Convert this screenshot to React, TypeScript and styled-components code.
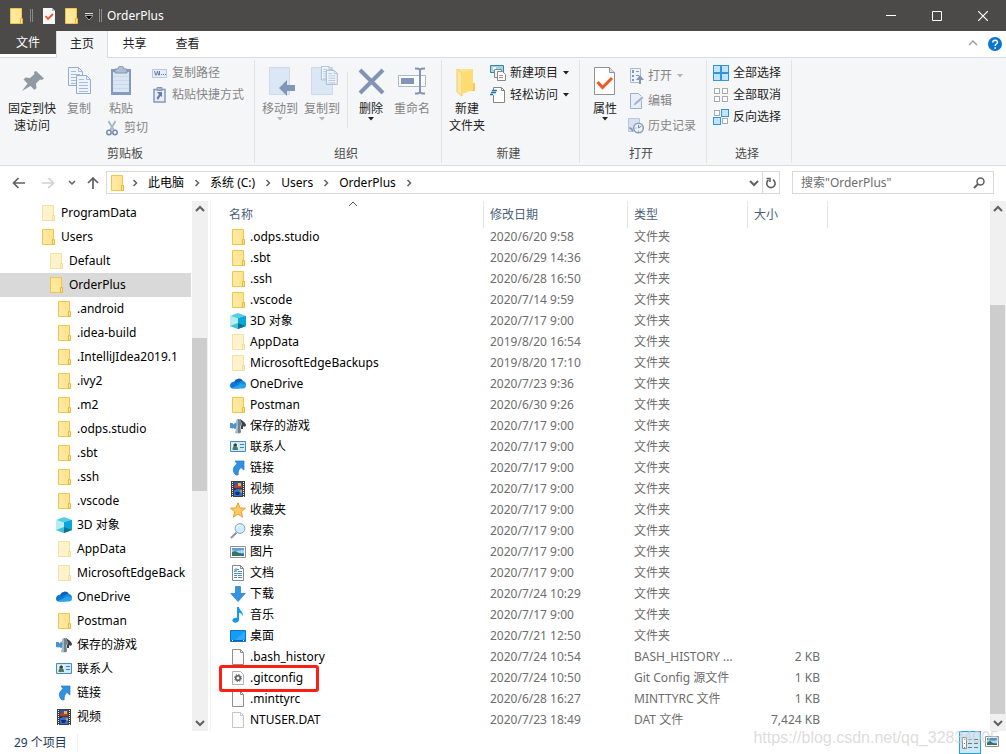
import React from 'react';
import styled, { createGlobalStyle, css } from 'styled-components';

const GlobalStyle = createGlobalStyle`
  * { box-sizing: border-box; }
  body {
    margin: 0;
    background: #fff;
    color: #000;
    font: 12px/18px "Noto Sans", "Noto Sans CJK SC", sans-serif;
  }
  button, input, select { font: inherit; color: inherit; }
  button { border: 0; padding: 0; background: none; cursor: default; }
  a { color: inherit; text-decoration: none; }
  svg { display: block; flex: none; }
`;

/* ---------- icons ---------- */

const Svg = ({ w = 16, h = 16, children }: { w?: number; h?: number; children: React.ReactNode }) => (
  <svg width={w} height={h} viewBox={`0 0 ${w} ${h}`} fill="none" aria-hidden="true">
    {children}
  </svg>
);

const FolderIcon = ({ faded = false }: { faded?: boolean }) => (
  <Svg>
    <g opacity={faded ? 0.5 : 1}>
      <path d="M2.5 .5h11v15h-11z" fill="#ffe593" stroke="#edc64a" />
      <path d="M3 1h3l5 14H3z" fill="#fff" opacity=".12" />
      <path d="M12.500 10.500h2v5h-2z" fill="#ffe593" stroke="#e3b93a" />
    </g>
  </Svg>
);

const CubeIcon = () => (
  <Svg>
    <path d="M0 3l8-3 8 3-8 3z" fill="#55cfe0" />
    <path d="M0 3l8 2.500V16l-8-3z" fill="#b8edf0" />
    <path d="M16 3L8 5.500V16l8-3z" fill="#0a98cc" />
    <path d="M0 13l8-3v6z" fill="#3fc0d4" />
    <path d="M16 13l-8-3v6z" fill="#0a7590" />
    <path d="M8 5.500V10l8 3V3z" fill="#08a6da" />
  </Svg>
);

const CloudIcon = () => (
  <Svg>
    <path d="M4 6a5 5 0 0 1 9-1l-6 5H2z" fill="#0762bb" />
    <path d="M0 9.500a3.500 3.500 0 0 1 5-3.300L11 11l-2 1.500H3a3 3 0 0 1-3-3z" fill="#0f78d4" />
    <path d="M9 6.500a3.800 3.800 0 0 1 4-1.500c2 .3 3 2 3 4L9 10 6 6z" fill="#1685da" />
    <path d="M2 12l8-4c2-1 6 0 6 2 0 1.600-1.300 2.500-2.800 2.500H3.500z" fill="#27a5ea" />
  </Svg>
);

const GamesIcon = () => (
  <Svg>
    <path d="M10 1c2 1.500 6 4 6 6 0 1.800-2 2-3 1.200V11h-2z" fill="#3d4044" />
    <path d="M8 1c1.600 0 3 1.300 2.600 3 1.500.5 2 2 1 3.400L10 8l1 6.500c-1 1.400-5 1.400-6 0L7 8C5 8 4.600 5 6 4c-.5-1.600.5-3 2-3z" fill="#a9b8c3" />
    <path d="M8 1v14c1.500 0 2.600-.2 3-.7L10 8c2-1 2-3.500.6-4C11 2.300 9.600 1 8 1z" fill="#71818d" />
    <path d="M0 5h2.500l1 1.500L5 4.800l1.500 1V10L5 11.300 3.500 10l-1 .6L0 10z" fill="#4d93cb" />
  </Svg>
);

const ContactIcon = () => (
  <Svg>
    <path d="M.5 2.500h15v10H.5z" fill="#cdeafa" stroke="#4b8cbb" />
    <path d="M2 4h6v7H2z" fill="#edf3ee" />
    <path d="M5 4.500a1.600 1.600 0 0 1 1.500 2.700c1 .4 1.500 1.500 1.500 3.800H2.500c0-2.300.4-3.400 1.200-3.800A1.600 1.600 0 0 1 5 4.500z" fill="#4f7767" />
    <path d="M5 4.500a1.500 1.500 0 0 1 1.300 2.500H3.700z" fill="#483629" />
    <path d="M10 5.500h4M10 8.500h4" stroke="#3e84b5" />
  </Svg>
);

const LinkIcon = () => (
  <Svg>
    <path d="M5 1h9v9l-3-2.400C8.500 9.500 8 12 8.200 14.800L6 15C3 12.500 1.500 7.500 7.200 3.800z" fill="#3191df" stroke="#2379c0" strokeWidth=".7" />
  </Svg>
);

const VideoIcon = () => (
  <Svg>
    <path d="M1 0h14v16H1z" fill="#3c3c3c" />
    <path d="M4 1h8v6H4z" fill="#2c57ac" />
    <path d="M4 8h8v7H4z" fill="#3170ce" />
    <path d="M4 5l3-2 2 1 1-1 2 2v2H4z" fill="#b43d32" />
    <path d="M8 2h3v3H8z" fill="#e8b83a" />
    <path d="M5 11h5l-1 3H6zM4 8h2v1H4z" fill="#132e70" />
    <path d="M9 10l3-1v3z" fill="#dba83f" />
    <path d="M2.500 1v15M13.500 1v15" stroke="#f4f4f4" strokeDasharray="1 1" />
  </Svg>
);

const StarIcon = () => (
  <Svg>
    <path d="M8 .8l2 5.200 5.500.2-4.300 3.500 1.500 5.500L8 12.100l-4.700 3.100 1.500-5.500L.5 6.200 6 6z" fill="#ffcb62" stroke="#e99b2e" />
  </Svg>
);

const SearchFolderIcon = () => (
  <Svg>
    <path d="M6.500 9.500L1 15" stroke="#8a949e" strokeWidth="2" />
    <circle cx="10" cy="5.500" r="4.900" fill="#d0ecfb" stroke="#7ba5c6" />
    <path d="M7 5a3 3 0 0 1 4-2.500" stroke="#fff" />
  </Svg>
);

const PictureIcon = () => (
  <Svg>
    <path d="M.5 2.500h15v11H.5z" fill="#fff" stroke="#8b9298" />
    <path d="M2 4h12v8H2z" fill="#a9d5f1" />
    <path d="M2 4h12v2L6 7 2 6z" fill="#5da0d9" />
    <path d="M2 8l3-1 4 2 5 .5V12H2z" fill="#36735f" />
    <path d="M6 12l4-1.500 4-.5v2z" fill="#356ea6" />
  </Svg>
);

const ThumbnailIcon = () => (
  <Svg>
    <path d="M1.500 1.500h13v10h-13z" fill="#fff" stroke="#8b9298" />
    <path d="M3 3h10v7H3z" fill="#a9d5f1" />
    <path d="M3 3h10v2L8 6 3 5z" fill="#4a90d6" />
    <path d="M3 7l3-1 3 2 4 .5V10H3z" fill="#36735f" />
  </Svg>
);

const DocumentIcon = () => (
  <Svg>
    <path d="M2.500.5h8l3 3v12h-11z" fill="#fff" stroke="#81898e" />
    <path d="M10.500.5v3h3" stroke="#81898e" />
    <path d="M7 4.500h2M4 6.500h2M8 6.500h4M4 8.500h8M4 10.500h3M8 10.500h4M4 12.500h3M8 12.500h4" stroke="#4b8dbb" />
    <path d="M4 4l3-1v4H5z" fill="#75b2db" />
  </Svg>
);

const DownloadIcon = () => (
  <Svg>
    <path d="M5.500.5h5v7h4.700L8 15.500.8 7.500h4.700z" fill="#3594e1" stroke="#2080cb" strokeWidth=".7" />
  </Svg>
);

const MusicIcon = () => (
  <Svg>
    <path d="M7 0h2c.2 3.500 5 4.500 3.600 9.500C12.400 7.300 10.800 6 9 5.800v7c0 1.700-1.600 2.900-3.500 2.900S2.400 14.700 2.400 13.300c0-1.700 2.200-3 4.600-2.500z" fill="#119bf0" />
  </Svg>
);

const DesktopIcon = () => (
  <Svg>
    <path d="M.5 2.500h15v11H.5z" fill="#159df5" stroke="#0675cb" />
    <path d="M15 3v8L6 13h-2z" fill="#4ab9fb" opacity=".5" />
    <path d="M1 12.500h14" stroke="#075fa8" />
    <path d="M2 12.500h1M13 12.500h1" stroke="#fff" />
  </Svg>
);

const FileIcon = ({ faded = false }: { faded?: boolean }) => (
  <Svg>
    <g opacity={faded ? 0.5 : 1}>
      <path d="M2.500.5h8l3 3v12h-11z" fill="#fafafa" stroke="#8e8e8e" />
      <path d="M10.500.5v3h3" stroke="#8e8e8e" />
    </g>
  </Svg>
);

const ConfigIcon = () => (
  <Svg>
    <path d="M2.500 1.500h8l3 3v10h-11z" fill="#fafafa" stroke="#b2b2b2" />
    <circle cx="8" cy="8" r="2.300" stroke="#596269" strokeWidth="1.600" />
    <circle cx="8" cy="8" r="3.500" stroke="#596269" strokeDasharray="1.300 1.450" />
  </Svg>
);

const CheckPageSmall = () => (
  <Svg>
    <path d="M2 0h9l3 3v13H2z" fill="#f7f7f7" />
    <path d="M11 0v3h3z" fill="#bcbcbc" />
    <path d="M4.500 8L7 11l5-5" stroke="#ea5524" strokeWidth="1.800" />
  </Svg>
);

const PinIcon = () => (
  <Svg w={32} h={32}>
    <path d="M20 5l8 7.500-2 1.500-2-.5-4 4 .5 4.500-2 2-4-4L6 25l5.500-7.500-4-4 2-2 4.500.5 4.500-4-.5-2z" fill="#8f9ba3" />
  </Svg>
);

const PageLines = ({ x, y }: { x: number; y: number }) => (
  <g transform={`translate(${x} ${y})`}>
    <path d="M.5.500h10l4 4v14h-14z" fill="#eef4fc" stroke="#97abca" />
    <path d="M10.500.5v4h4M3 4.500h5M3 7.500h9M3 10.500h9M3 13.500h9M3 16.500h9" stroke="#a9bbd6" />
  </g>
);

const CopyIcon = () => (
  <Svg w={32} h={32}>
    <PageLines x={5} y={1} />
    <PageLines x={13} y={9} />
  </Svg>
);

const PasteIcon = () => (
  <Svg w={32} h={32}>
    <path d="M6 3h20v26H6z" fill="#839abd" />
    <path d="M8 6h16v20H8z" fill="#dbe6f5" />
    <path d="M8 10.500h16M8 14.500h16M8 18.500h16M8 22.500h16" stroke="#ccd9ec" />
    <path d="M10 3h3c0-4 6-4 6 0h3v4H10z" fill="#aebdd1" stroke="#8395b3" />
  </Svg>
);

const CutIcon = () => (
  <Svg>
    <path d="M4.500 1l5.500 9.500M11.500 1L6 10.500" stroke="#a3b4cc" strokeWidth="1.800" />
    <circle cx="5" cy="12.500" r="2.200" stroke="#7389ac" strokeWidth="1.500" />
    <circle cx="11" cy="12.500" r="2.200" stroke="#7389ac" strokeWidth="1.500" />
  </Svg>
);

const PathIcon = () => (
  <Svg>
    <path d="M0 4h15v9H0z" fill="#b9c9e0" />
    <path d="M1 5h13v7H1z" fill="#e7edf7" />
    <path d="M2.500 6l1 4h1l1-4 1 4h1V6M9 9.500h1M11 9.500h1M13 9.500h1" stroke="#67809f" />
  </Svg>
);

const PasteShortcutIcon = () => (
  <Svg>
    <path d="M2 2.500h11v12.500H2z" fill="#e7eef8" stroke="#8398b9" strokeWidth="1.500" />
    <path d="M5 .5h5v3H5z" fill="#a6b6cc" stroke="#8398b9" />
    <path d="M5 5h5v5L8.500 9 6 13 4.500 11 7 7.500z" fill="#647da3" />
  </Svg>
);

const MoveToIcon = () => (
  <Svg w={32} h={32}>
    <path d="M5.500 1.500h20v27h-20z" fill="#dce7f6" stroke="#cedaec" />
    <path d="M15 22l8-8v5h8v6h-8v5z" fill="#8296b7" />
  </Svg>
);

const CopyToIcon = () => (
  <Svg w={32} h={32}>
    <path d="M5.500 1.500h21v27h-21z" fill="#dce7f6" stroke="#cedaec" />
    <g transform="translate(15 0) scale(.75)"><PageLines x={0} y={0} /></g>
    <g transform="translate(20 4) scale(.78)"><PageLines x={0} y={0} /></g>
  </Svg>
);

const DeleteIcon = () => (
  <Svg w={32} h={32}>
    <path d="M5 4l23 23M28 4L5 27" stroke="#8194b5" strokeWidth="4" />
  </Svg>
);

const RenameIcon = () => (
  <Svg w={32} h={32}>
    <path d="M2.500 9.500h27v11h-27z" fill="#fafcfe" stroke="#a9b9d1" />
    <path d="M5 12h13v6H5z" fill="#8295b7" />
    <path d="M19 2.500c3 0 5 0 5 2 0-2 2-2 5-2M24 4v22M19 27.500c3 0 5 0 5-2 0 2 2 2 5 2" stroke="#8194b5" strokeWidth="2" />
  </Svg>
);

const NewFolderIcon = () => (
  <Svg w={32} h={32}>
    <path d="M6 3h16v21H6z" fill="#ffe28b" />
    <path d="M20 17h4v8h-4z" fill="#f1ca52" />
    <path d="M6 3l5 4v23l-5-4z" fill="#fbe6a2" stroke="#f0cd62" />
    <path d="M11 7l11-4v21l-11 4z" fill="#ffdc72" />
  </Svg>
);

const NewItemIcon = () => (
  <Svg>
    <path d="M.5.500h13v7H.5z" fill="#9fd6e5" stroke="#3f8399" />
    <path d="M3 2h3v3H3z" fill="#fff" />
    <path d="M4.500 4.500h7v8h-7z" fill="#f2f6f7" stroke="#7e8b90" />
    <path d="M7.500 6.500h5l3 3v6h-8z" fill="#fff" stroke="#84888b" />
    <path d="M9 10.500h4M9 12.500h4" stroke="#dd8573" />
  </Svg>
);

const EasyAccessIcon = () => (
  <Svg>
    <path d="M3.500.5h8l3 3v12h-11z" fill="#fff" stroke="#858585" />
    <path d="M11.500.5v3h3" stroke="#858585" />
    <path d="M2 3h5v5H1z" fill="#f5f6f7" />
    <path d="M2 3.500h5M1 5.500h5M0 7.500h3" stroke="#2776b6" strokeWidth="1.400" />
  </Svg>
);

const PropertiesIcon = () => (
  <Svg w={32} h={32}>
    <path d="M5.500 1.500h15l5 5v22h-20z" fill="#fff" stroke="#919191" />
    <path d="M20.500 1.500v5h5" fill="#ddd" stroke="#919191" />
    <path d="M8.500 16l5 5.500L23 12" stroke="#ee5a24" strokeWidth="3" />
  </Svg>
);

const OpenIcon = () => (
  <Svg>
    <path d="M2.500.5h10v14h-10z" fill="#eff4fb" stroke="#abb9ce" />
    <path d="M4 2h2v3H4zM4 7h2v2H4zM4 11h2v2H4zM8 3h3v1H8zM8 7h3v1H8z" fill="#8296b7" />
    <path d="M11 16v-4H8l4-5 4 5h-3v4z" fill="#8296b7" />
  </Svg>
);

const EditIcon = () => (
  <Svg>
    <path d="M2.500.5h8l3 3v12h-11z" fill="#e7eef8" stroke="#9cafcb" />
    <path d="M5 13l1-3 8-7 2 2-8 7z" fill="#a4b4cd" stroke="#fff" strokeWidth=".6" />
  </Svg>
);

const HistoryIcon = () => (
  <Svg>
    <path d="M.5.500h11v13H.5z" fill="#d7e1ef" stroke="#b7c6dc" />
    <circle cx="10.500" cy="10" r="4.800" fill="#eef3f9" stroke="#8b9dbc" strokeWidth="1.500" />
    <path d="M10.500 7v3l3-2M7.500 10h1M10.500 12.500v1" stroke="#7488aa" />
    <path d="M2 9l3 2v3l-4-4z" fill="#8498b8" />
  </Svg>
);

const SelectGrid = ({ on }: { on: boolean[] }) => (
  <Svg>
    {on.map((active, i) => {
      const x = (i % 2) * 8;
      const y = i > 1 ? 8 : 0;
      return active ? (
        <rect key={i} x={x + 0.5} y={y + 0.5} width="7" height="7" fill="#bfe4fc" stroke="#3194dd" />
      ) : (
        <rect key={i} x={x + 1.5} y={y + 1.5} width="5" height="5" fill="#fff" stroke="#aaa" />
      );
    })}
  </Svg>
);

const Chevron = ({ dir, color = '#606060', width = 1.5 }: { dir: 'up' | 'down' | 'right'; color?: string; width?: number }) => {
  const paths = { up: 'M1 6l4-4 4 4', down: 'M1 3l4 4 4-4', right: 'M3.500 2l3 3-3 3' };
  return (
    <Svg w={10} h={10}>
      <path d={paths[dir]} stroke={color} strokeWidth={width} />
    </Svg>
  );
};

const Caret = ({ muted = false }: { muted?: boolean }) => (
  <Svg w={6} h={4}>
    <path d="M0 0h6L3 3.500z" fill={muted ? '#b4b4b4' : '#222'} />
  </Svg>
);

const BackArrow = () => (
  <Svg w={14} h={14}>
    <path d="M13 7H2M6.500 2L1.500 7l5 5" stroke="#606060" strokeWidth="1.700" />
  </Svg>
);

const ForwardArrow = () => (
  <Svg w={14} h={14}>
    <path d="M1 7h11M7.500 2l5 5-5 5" stroke="#d0d0d0" strokeWidth="1.700" />
  </Svg>
);

/* ---------- window frame ---------- */

const Window = styled.div`
  position: relative;
  display: flex;
  flex-direction: column;
  height: 100vh;
  overflow: hidden;
`;

const TitleBar = styled.header`
  display: flex;
  flex: none;
  align-items: center;
  height: 31px;
  padding-left: 8px;
  background: #4b4a48;
  color: #fff;
`;

const QuickAccess = styled.div`
  display: flex;
  align-items: center;
  gap: 6px;
  padding-right: 5px;
`;

const Grip = styled.span`
  width: 3px;
  height: 13px;
  border: solid #8a8988;
  border-width: 0 1px;
  margin-right: 2px;

  &:last-child { margin-right: 0; }
`;

const WindowTitle = styled.h1`
  flex: 1;
  margin: 0;
  font-size: 12px;
  font-weight: 400;
`;

const CaptionButton = styled.button`
  display: grid;
  place-items: center;
  width: 46px;
  height: 31px;
`;

const TabStrip = styled.nav`
  display: flex;
  flex: none;
  height: 27px;
  border-bottom: 1px solid #dadbdc;
`;

const Tab = styled.button<{ $kind?: 'file' | 'active' }>`
  width: 53px;
  height: 25px;
  color: #222;
  ${({ $kind }) => $kind === 'file' && css`
    width: 56px;
    height: 23px;
    background: #4b4a48;
    color: #fff;
  `}
  ${({ $kind }) => $kind === 'active' && css`
    width: 52px;
    height: 27px;
    padding-bottom: 2px;
    border: solid #dadbdc;
    border-width: 0 1px;
    background: #f5f6f7;
  `}
`;

const TabTools = styled.div`
  display: flex;
  align-items: center;
  gap: 10px;
  margin-left: auto;
  padding-right: 4px;
`;

/* ---------- ribbon ---------- */

const Ribbon = styled.section`
  display: flex;
  flex: none;
  height: 108px;
  padding: 2px 0;
  border-bottom: 1px solid #dadbdc;
  background: #f5f6f7;
`;

const Group = styled.section`
  display: flex;
  flex-direction: column;
  justify-content: space-between;
  padding: 0 8px 0 4px;
  border-right: 1px solid #e2e3e4;
`;

const GroupBody = styled.div`
  display: flex;
`;

const GroupLabel = styled.h2`
  margin: 0;
  color: #4a4a4a;
  font-size: 12px;
  font-weight: 400;
  text-align: center;
`;

const BigButtonRoot = styled.button<{ $width: number; $muted?: boolean }>`
  display: flex;
  flex-direction: column;
  align-items: center;
  width: ${({ $width }) => $width}px;
  padding-top: 6px;
  color: ${({ $muted }) => ($muted ? '#858585' : '#222')};
  line-height: 17px;
  white-space: pre-line;

  span { padding-top: 2px; }
`;

interface BigButtonProps {
  icon: React.ReactNode;
  label: string;
  width: number;
  muted?: boolean;
  menu?: boolean;
}

const BigButton = ({ icon, label, width, muted, menu }: BigButtonProps) => (
  <BigButtonRoot type="button" $width={width} $muted={muted}>
    {icon}
    <span>{label}</span>
    {menu && <Caret muted={muted} />}
  </BigButtonRoot>
);

const SmallColumn = styled.div<{ $roomy?: boolean }>`
  display: flex;
  flex-direction: column;
  gap: ${({ $roomy }) => ($roomy ? 3 : 0)}px;
  padding: ${({ $roomy }) => ($roomy ? 5 : 2)}px 2px 0;
`;

const PasteColumn = styled.div`
  display: flex;
  flex-direction: column;
  margin-right: 2px;
`;

const CutRow = styled.div`
  padding-left: 6px;
`;

const SmallButtonRoot = styled.button<{ $muted?: boolean }>`
  display: flex;
  align-items: center;
  gap: 4px;
  height: 22px;
  color: ${({ $muted }) => ($muted ? '#858585' : '#222')};
  white-space: nowrap;

  svg:last-child:not(:first-child) { margin-left: 1px; }
`;

interface SmallButtonProps {
  icon: React.ReactNode;
  label: string;
  muted?: boolean;
  menu?: boolean;
}

const SmallButton = ({ icon, label, muted, menu }: SmallButtonProps) => (
  <SmallButtonRoot type="button" $muted={muted}>
    {icon}
    <span>{label}</span>
    {menu && <Caret muted={muted} />}
  </SmallButtonRoot>
);

const Divider = styled.span`
  width: 1px;
  height: 56px;
  margin: 12px 3px 0 4px;
  background: #e2e3e4;
`;

/* ---------- address row ---------- */

const AddressRow = styled.div`
  display: flex;
  flex: none;
  align-items: center;
  height: 35px;
  padding: 0 12px 2px;
`;

const HistoryNav = styled.div`
  display: flex;
  align-items: center;
  gap: 15px;
  width: 94px;
`;

const HistoryTail = styled.div`
  display: flex;
  align-items: center;
  gap: 9px;
  margin-left: -3px;
`;

const AddressBox = styled.div`
  display: flex;
  flex: 1;
  align-items: center;
  height: 23px;
  margin-right: 12px;
  padding-left: 2px;
  border: 1px solid #d9d9d9;
`;

const Crumbs = styled.ol`
  display: flex;
  flex: 1;
  align-items: center;
  margin: 0 0 0 -3px;
  padding: 0;
  list-style: none;

  li { display: flex; align-items: center; }
`;

const CrumbArrow = styled.span`
  display: grid;
  place-items: center;
  width: 26px;
`;

const AddressButton = styled.button<{ $bordered?: boolean }>`
  display: grid;
  place-items: center;
  width: 17px;
  height: 21px;
  border-left: ${({ $bordered }) => ($bordered ? '1px solid #d9d9d9' : '0')};
`;

const SearchBox = styled.label`
  display: flex;
  flex: 0 0 20%;
  min-width: 202px;
  align-items: center;
  height: 23px;
  padding: 0 8px;
  border: 1px solid #d9d9d9;
`;

const SearchInput = styled.input`
  flex: 1;
  min-width: 0;
  padding: 0;
  border: 0;
  outline: 0;
  background: none;
  &::placeholder { color: #6d6d6d; opacity: 1; }
`;

/* ---------- body ---------- */

const Body = styled.main`
  display: flex;
  flex: 1;
  min-height: 0;
`;

const TreePane = styled.nav`
  display: flex;
  flex: none;
  width: 211px;
  padding-right: 2px;
  border-right: 1px solid #f3f3f3;
`;

const TreeList = styled.ul`
  flex: 1;
  min-width: 0;
  margin: 0;
  padding: 0 1px 0 0;
  overflow: hidden;
  list-style: none;
`;

const TreeLink = styled.a<{ $level: number; $selected?: boolean }>`
  display: flex;
  align-items: center;
  gap: 5px;
  height: 24px;
  padding-left: ${({ $level }) => 40 + $level * 8}px;
  overflow: hidden;
  background: ${({ $selected }) => ($selected ? '#d9d9d9' : 'transparent')};
  white-space: nowrap;
`;

const ScrollTrack = styled.div`
  display: flex;
  flex: none;
  flex-direction: column;
  width: 16px;
  background: #f0f0f0;
`;

const ScrollButton = styled.button`
  display: grid;
  flex: none;
  place-items: center;
  width: 15px;
  height: 17px;
`;

const ScrollPart = styled.div<{ $share: number; $thumb?: boolean }>`
  flex: ${({ $share }) => $share} 0 0;
  margin-right: 1px;
  background: ${({ $thumb }) => ($thumb ? '#cdcdcd' : 'transparent')};
`;

const ScrollBar = ({ before, thumb, after }: { before: number; thumb: number; after: number }) => (
  <ScrollTrack>
    <ScrollButton type="button" aria-label="向上滚动"><Chevron dir="up" width={2} /></ScrollButton>
    <ScrollPart $share={before} />
    <ScrollPart $share={thumb} $thumb />
    <ScrollPart $share={after} />
    <ScrollButton type="button" aria-label="向下滚动"><Chevron dir="down" width={2} /></ScrollButton>
  </ScrollTrack>
);

const FilePane = styled.section`
  display: flex;
  flex: 1;
  min-width: 0;
`;

const TableArea = styled.div`
  flex: 1;
  min-width: 0;
  overflow: hidden;
`;

const FileTable = styled.table`
  width: 617px;
  border-collapse: collapse;
  table-layout: fixed;
`;

const HeadCell = styled.th<{ $width: number }>`
  position: relative;
  width: ${({ $width }) => $width}px;
  height: 25px;
  padding: 2px 0 0 6px;
  color: #4c607a;
  font-weight: 400;
  text-align: left;

  &:first-child { padding-left: 18px; }
  &::after {
    content: "";
    position: absolute;
    top: 0;
    right: 0;
    width: 1px;
    height: 27px;
    background: #e5e5e5;
  }
`;

const SortMark = styled.span`
  position: absolute;
  top: -1px;
  left: 50%;
`;

const Cell = styled.td<{ $right?: boolean }>`
  height: 21px;
  padding: 0 8px 0 6px;
  overflow: hidden;
  color: #6d6d6d;
  text-align: ${({ $right }) => ($right ? 'right' : 'left')};
  text-overflow: ellipsis;
  white-space: nowrap;
`;

const NameCell = styled(Cell)`
  position: relative;
  padding: 0 0 0 19px;
  overflow: visible;
  color: #000;
`;

const FileName = styled.a`
  display: flex;
  align-items: center;
  gap: 4px;
`;

const Callout = styled.span`
  position: absolute;
  top: -2px;
  left: 8px;
  width: 100px;
  height: 27px;
  border: 3px solid #fb1f14;
  border-radius: 3px;
  z-index: 1;
`;

const StatusBar = styled.footer`
  display: flex;
  flex: none;
  align-items: center;
  height: 23px;
  padding: 0 6px 0 14px;
  color: #1e395b;
`;

const ItemCount = styled.span`
  padding-right: 10px;
  margin-right: auto;
  border-right: 1px solid #f0f0f0;
`;

const ViewButton = styled.button<{ $active?: boolean }>`
  display: grid;
  place-items: center;
  width: 22px;
  height: 23px;
  margin-left: 2px;
  border: ${({ $active }) => ($active ? '1px solid #26a0da' : '0')};
  background: ${({ $active }) => ($active ? '#cbe8f6' : 'transparent')};

  &:last-child { width: 16px; margin-left: 3px; }
`;

const Watermark = styled.div`
  position: absolute;
  right: 7px;
  bottom: 6px;
  color: rgba(205, 205, 205, 0.7);
  font: 16px/20px "Liberation Sans", sans-serif;
  pointer-events: none;
`;

/* ---------- data ---------- */

const glyphs = {
  folder: <FolderIcon />,
  hidden: <FolderIcon faded />,
  cube: <CubeIcon />,
  cloud: <CloudIcon />,
  games: <GamesIcon />,
  contact: <ContactIcon />,
  link: <LinkIcon />,
  video: <VideoIcon />,
  star: <StarIcon />,
  search: <SearchFolderIcon />,
  picture: <PictureIcon />,
  document: <DocumentIcon />,
  download: <DownloadIcon />,
  music: <MusicIcon />,
  desktop: <DesktopIcon />,
  file: <FileIcon />,
  hiddenFile: <FileIcon faded />,
  config: <ConfigIcon />,
};
type Glyph = keyof typeof glyphs;

const tree: [Glyph, string, number][] = [
  ['hidden', 'ProgramData', 0],
  ['folder', 'Users', 0],
  ['hidden', 'Default', 1],
  ['folder', 'OrderPlus', 1],
  ['folder', '.android', 2],
  ['folder', '.idea-build', 2],
  ['folder', '.IntelliJIdea2019.1', 2],
  ['folder', '.ivy2', 2],
  ['folder', '.m2', 2],
  ['folder', '.odps.studio', 2],
  ['folder', '.sbt', 2],
  ['folder', '.ssh', 2],
  ['folder', '.vscode', 2],
  ['cube', '3D 对象', 2],
  ['hidden', 'AppData', 2],
  ['hidden', 'MicrosoftEdgeBack', 2],
  ['cloud', 'OneDrive', 2],
  ['folder', 'Postman', 2],
  ['games', '保存的游戏', 2],
  ['contact', '联系人', 2],
  ['link', '链接', 2],
  ['video', '视频', 2],
];

const files: [Glyph, string, string, string?, string?][] = [
  ['folder', '.odps.studio', '2020/6/20 9:58'],
  ['folder', '.sbt', '2020/6/29 14:36'],
  ['folder', '.ssh', '2020/6/28 16:50'],
  ['folder', '.vscode', '2020/7/14 9:59'],
  ['cube', '3D 对象', '2020/7/17 9:00'],
  ['hidden', 'AppData', '2019/8/20 16:54'],
  ['hidden', 'MicrosoftEdgeBackups', '2019/8/20 17:10'],
  ['cloud', 'OneDrive', '2020/7/23 9:36'],
  ['folder', 'Postman', '2020/6/30 9:26'],
  ['games', '保存的游戏', '2020/7/17 9:00'],
  ['contact', '联系人', '2020/7/17 9:00'],
  ['link', '链接', '2020/7/17 9:00'],
  ['video', '视频', '2020/7/17 9:00'],
  ['star', '收藏夹', '2020/7/17 9:00'],
  ['search', '搜索', '2020/7/17 9:00'],
  ['picture', '图片', '2020/7/17 9:00'],
  ['document', '文档', '2020/7/17 9:00'],
  ['download', '下载', '2020/7/24 10:29'],
  ['music', '音乐', '2020/7/17 9:00'],
  ['desktop', '桌面', '2020/7/21 12:50'],
  ['file', '.bash_history', '2020/7/24 10:54', 'BASH_HISTORY ...', '2 KB'],
  ['config', '.gitconfig', '2020/7/24 10:50', 'Git Config 源文件', '1 KB'],
  ['file', '.minttyrc', '2020/6/28 16:27', 'MINTTYRC 文件', '1 KB'],
  ['hiddenFile', 'NTUSER.DAT', '2020/7/23 18:49', 'DAT 文件', '7,424 KB'],
];

const crumbs = ['此电脑', '系统 (C:)', 'Users', 'OrderPlus'];

/* ---------- page ---------- */

export default function App() {
  return (
    <Window>
      <GlobalStyle />
      <TitleBar>
        <QuickAccess>
          <FolderIcon />
          <Grip />
          <CheckPageSmall />
          <FolderIcon />
          <Svg w={8} h={8}>
            <path d="M0 1.500h8" stroke="#ddd" />
            <path d="M0 3.500h8L4 8z" fill="#000" stroke="#ddd" strokeWidth=".7" />
          </Svg>
          <Grip />
        </QuickAccess>
        <WindowTitle>OrderPlus</WindowTitle>
        <CaptionButton type="button" aria-label="最小化">
          <Svg w={10} h={10}><path d="M0 4.500h10" stroke="#fff" /></Svg>
        </CaptionButton>
        <CaptionButton type="button" aria-label="最大化">
          <Svg w={10} h={10}><path d="M.5.500h9v9h-9z" stroke="#fff" /></Svg>
        </CaptionButton>
        <CaptionButton type="button" aria-label="关闭">
          <Svg w={10} h={10}><path d="M0 0l10 10M10 0L0 10" stroke="#fff" strokeWidth="1.200" /></Svg>
        </CaptionButton>
      </TitleBar>

      <TabStrip>
        <Tab type="button" $kind="file">文件</Tab>
        <Tab type="button" $kind="active">主页</Tab>
        <Tab type="button">共享</Tab>
        <Tab type="button">查看</Tab>
        <TabTools>
          <Chevron dir="up" color="#a0a0a0" />
          <Svg w={14} h={14}>
            <circle cx="7" cy="7" r="7" fill="#0b76d0" />
            <path d="M4.800 5.500c0-3 4.600-3 4.600-.3C9.400 7 7.100 7 7.100 9M7.100 10.200v1.600" stroke="#fff" strokeWidth="1.500" />
          </Svg>
        </TabTools>
      </TabStrip>

      <Ribbon>
        <Group>
          <GroupBody>
            <BigButton icon={<PinIcon />} label={'固定到快\n速访问'} width={56} />
            <BigButton icon={<CopyIcon />} label="复制" width={38} muted />
            <PasteColumn>
              <BigButton icon={<PasteIcon />} label="粘贴" width={46} muted />
              <CutRow>
                <SmallButton icon={<CutIcon />} label="剪切" muted />
              </CutRow>
            </PasteColumn>
            <SmallColumn>
              <SmallButton icon={<PathIcon />} label="复制路径" muted />
              <SmallButton icon={<PasteShortcutIcon />} label="粘贴快捷方式" muted />
            </SmallColumn>
          </GroupBody>
          <GroupLabel>剪贴板</GroupLabel>
        </Group>
        <Group>
          <GroupBody>
            <BigButton icon={<MoveToIcon />} label="移动到" width={42} muted menu />
            <BigButton icon={<CopyToIcon />} label="复制到" width={42} muted menu />
            <Divider />
            <BigButton icon={<DeleteIcon />} label="删除" width={40} menu />
            <BigButton icon={<RenameIcon />} label="重命名" width={42} muted />
          </GroupBody>
          <GroupLabel>组织</GroupLabel>
        </Group>
        <Group>
          <GroupBody>
            <BigButton icon={<NewFolderIcon />} label={'新建\n文件夹'} width={42} />
            <SmallColumn>
              <SmallButton icon={<NewItemIcon />} label="新建项目" menu />
              <SmallButton icon={<EasyAccessIcon />} label="轻松访问" menu />
            </SmallColumn>
          </GroupBody>
          <GroupLabel>新建</GroupLabel>
        </Group>
        <Group>
          <GroupBody>
            <BigButton icon={<PropertiesIcon />} label="属性" width={42} menu />
            <SmallColumn $roomy>
              <SmallButton icon={<OpenIcon />} label="打开" muted menu />
              <SmallButton icon={<EditIcon />} label="编辑" muted />
              <SmallButton icon={<HistoryIcon />} label="历史记录" muted />
            </SmallColumn>
          </GroupBody>
          <GroupLabel>打开</GroupLabel>
        </Group>
        <Group>
          <GroupBody>
            <SmallColumn>
              <SmallButton icon={<SelectGrid on={[true, true, true, true]} />} label="全部选择" />
              <SmallButton icon={<SelectGrid on={[false, false, false, false]} />} label="全部取消" />
              <SmallButton icon={<SelectGrid on={[false, true, true, false]} />} label="反向选择" />
            </SmallColumn>
          </GroupBody>
          <GroupLabel>选择</GroupLabel>
        </Group>
      </Ribbon>

      <AddressRow>
        <HistoryNav>
          <button type="button" aria-label="后退"><BackArrow /></button>
          <button type="button" aria-label="前进"><ForwardArrow /></button>
          <HistoryTail>
            <button type="button" aria-label="最近位置">
              <Svg w={10} h={10}><path d="M2 3l3 3 3-3" stroke="#606060" strokeWidth="1.500" /></Svg>
            </button>
            <button type="button" aria-label="上移">
              <Svg w={14} h={14}><path d="M7 13V2M2 7l5-5 5 5" stroke="#606060" strokeWidth="1.700" /></Svg>
            </button>
          </HistoryTail>
        </HistoryNav>
        <AddressBox>
          <FolderIcon />
          <Crumbs>
            {crumbs.map((name) => (
              <li key={name}>
                <CrumbArrow><Chevron dir="right" /></CrumbArrow>
                <a href="#crumb">{name}</a>
              </li>
            ))}
            <li><CrumbArrow><Chevron dir="right" /></CrumbArrow></li>
          </Crumbs>
          <AddressButton type="button" aria-label="历史位置"><Chevron dir="down" width={2} /></AddressButton>
          <AddressButton type="button" aria-label="刷新" $bordered>
            <Svg w={12} h={12}>
              <path d="M8 2.800a4.200 4.200 0 1 1-4.500.2" stroke="#606060" strokeWidth="1.600" />
              <path d="M1.500 1.500H5V5" stroke="#606060" strokeWidth="1.500" />
            </Svg>
          </AddressButton>
        </AddressBox>
        <SearchBox>
          <SearchInput type="text" aria-label="搜索" placeholder={'搜索"OrderPlus"'} />
          <Svg w={12} h={12}>
            <circle cx="7.500" cy="4.500" r="3.500" stroke="#606060" strokeWidth="1.500" />
            <path d="M5 7L1 11" stroke="#606060" strokeWidth="2" />
          </Svg>
        </SearchBox>
      </AddressRow>

      <Body>
        <TreePane aria-label="导航窗格">
          <TreeList>
            {tree.map(([glyph, name, level]) => (
              <li key={name}>
                <TreeLink href="#folder" $level={level} $selected={name === 'OrderPlus'}>
                  {glyphs[glyph]}
                  <span>{name}</span>
                </TreeLink>
              </li>
            ))}
          </TreeList>
          <ScrollBar before={120} thumb={153} after={223} />
        </TreePane>

        <FilePane>
          <TableArea>
            <FileTable>
              <thead>
                <tr>
                  <HeadCell scope="col" $width={273}>
                    名称
                    <SortMark><Chevron dir="up" width={1} /></SortMark>
                  </HeadCell>
                  <HeadCell scope="col" $width={144}>修改日期</HeadCell>
                  <HeadCell scope="col" $width={120}>类型</HeadCell>
                  <HeadCell scope="col" $width={80}>大小</HeadCell>
                </tr>
              </thead>
              <tbody>
                {files.map(([glyph, name, date, kind = '文件夹', size = '']) => (
                  <tr key={name}>
                    <NameCell>
                      <FileName href="#file">
                        {glyphs[glyph]}
                        <span>{name}</span>
                      </FileName>
                      {name === '.gitconfig' && <Callout />}
                    </NameCell>
                    <Cell>{date}</Cell>
                    <Cell>{kind}</Cell>
                    <Cell $right>{size}</Cell>
                  </tr>
                ))}
              </tbody>
            </FileTable>
          </TableArea>
          <ScrollBar before={87} thumb={410} after={0} />
        </FilePane>
      </Body>

      <StatusBar>
        <ItemCount>29 个项目</ItemCount>
        <ViewButton type="button" aria-label="详细信息" $active>
          <Svg>
            <path d="M.5 2.500h4v11h-4z" fill="#fff" stroke="#8b8b8b" />
            <path d="M6 4.500h4M12 4.500h4M6 8.500h4M12 8.500h4M6 12.500h4M12 12.500h4" stroke="#6c7880" />
            <path d="M2 4h1v1H2z" fill="#3a9b4c" />
            <path d="M2 8h1v1H2z" fill="#3777c9" />
            <path d="M2 12h1v1H2z" fill="#d24a3a" />
          </Svg>
        </ViewButton>
        <ViewButton type="button" aria-label="大图标">
          <ThumbnailIcon />
        </ViewButton>
      </StatusBar>
      <Watermark>https://blog.csdn.net/qq_32834005</Watermark>
    </Window>
  );
}
